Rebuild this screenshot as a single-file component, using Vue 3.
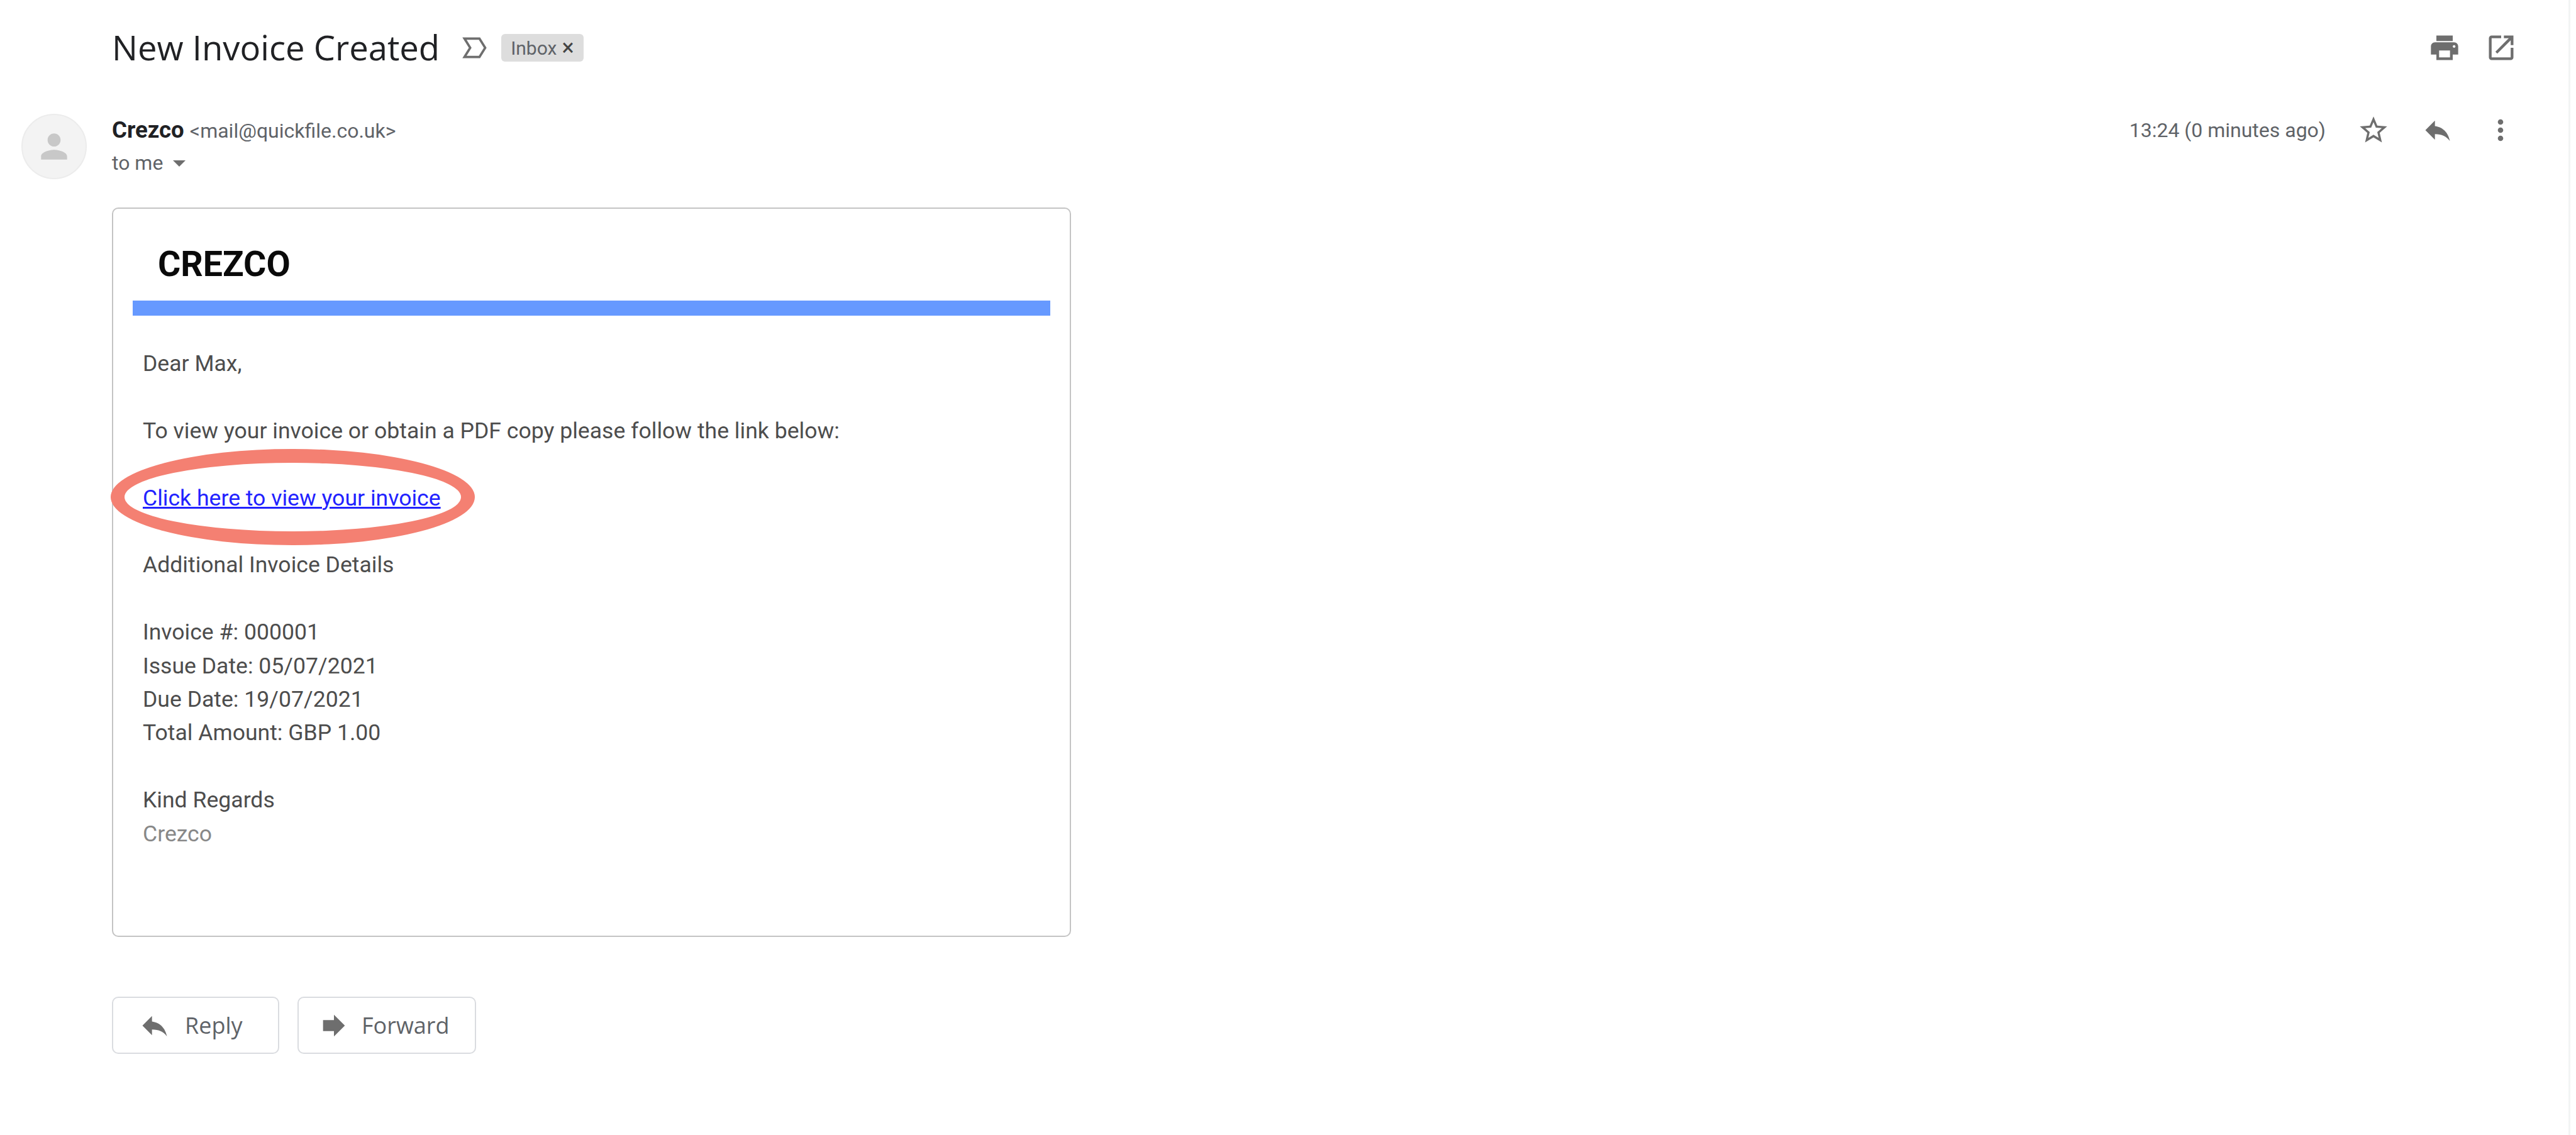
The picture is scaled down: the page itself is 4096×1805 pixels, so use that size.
<script setup>
const bodyLines = ['Invoice #: 000001', 'Issue Date: 05/07/2021', 'Due Date: 19/07/2021', 'Total Amount: GBP 1.00']
</script>

<template>
  <div class="page">
    <header class="subject">
      <h1 class="title">New Invoice Created</h1>
      <svg class="marker" viewBox="0 0 24 24"><path d="M3 4h13l5 8-5 8H3l5-8z" fill="none" stroke="#6e6e6e" stroke-width="2"/></svg>
      <span class="chip">Inbox <span class="chip-x">×</span></span>
      <div class="top-actions">
        <svg class="icon" viewBox="0 0 24 24"><path d="M19 8H5c-1.66 0-3 1.34-3 3v6h4v4h12v-4h4v-6c0-1.66-1.34-3-3-3zm-3 11H8v-5h8v5zm3-7c-.55 0-1-.45-1-1s.45-1 1-1 1 .45 1 1-.45 1-1 1zm-1-9H6v4h12V3z"/></svg>
        <svg class="icon" viewBox="0 0 24 24"><path d="M19 19H5V5h7V3H5c-1.11 0-2 .9-2 2v14c0 1.1.89 2 2 2h14c1.1 0 2-.9 2-2v-7h-2v7zM14 3v2h3.59l-9.83 9.83 1.41 1.41L19 6.41V10h2V3h-7z"/></svg>
      </div>
    </header>

    <section class="message">
      <div class="avatar">
        <svg viewBox="0 0 24 24"><path d="M12 12c2.21 0 4-1.79 4-4s-1.79-4-4-4-4 1.79-4 4 1.79 4 4 4zm0 2c-2.67 0-8 1.34-8 4v2h16v-2c0-2.66-5.33-4-8-4z"/></svg>
      </div>
      <div class="main">
        <div class="meta">
          <div class="sender">
            <div class="from"><b>Crezco</b> <span class="addr">&lt;mail@quickfile.co.uk&gt;</span></div>
            <div class="to">to me <i class="caret"></i></div>
          </div>
          <div class="meta-right">
            <span class="time">13:24 (0 minutes ago)</span>
            <svg class="icon star" viewBox="0 0 24 24"><path d="M22 9.24l-7.19-.62L12 2 9.19 8.63 2 9.24l5.46 4.73L5.82 21 12 17.27 18.18 21l-1.63-7.03L22 9.24zM12 15.4l-3.76 2.27 1-4.28-3.32-2.88 4.38-.38L12 6.1l1.71 4.04 4.38.38-3.32 2.88 1 4.28L12 15.4z"/></svg>
            <svg class="icon reply" viewBox="0 0 24 24"><path d="M10 9V5l-7 7 7 7v-4.1c5 0 8.5 1.6 11 5.1-1-5-4-10-11-11z"/></svg>
            <svg class="icon dots" viewBox="0 0 24 24"><path d="M12 8c1.1 0 2-.9 2-2s-.9-2-2-2-2 .9-2 2 .9 2 2 2zm0 2c-1.1 0-2 .9-2 2s.9 2 2 2 2-.9 2-2-.9-2-2-2zm0 6c-1.1 0-2 .9-2 2s.9 2 2 2 2-.9 2-2-.9-2-2-2z"/></svg>
          </div>
        </div>

        <article class="card">
          <div class="brand">CREZCO</div>
          <div class="bar"></div>
          <div class="body">
            <p>Dear Max,</p>
            <p>To view your invoice or obtain a PDF copy please follow the link below:</p>
            <p><span class="link-wrap"><a class="link">Click here to view your invoice</a><span class="ring"></span></span></p>
            <p>Additional Invoice Details</p>
            <p><span v-for="line in bodyLines" :key="line" class="line">{{ line }}</span></p>
            <p><span class="line">Kind Regards</span><span class="line sig">Crezco</span></p>
          </div>
        </article>

        <div class="buttons">
          <button class="btn reply-btn">
            <svg viewBox="0 0 24 24"><path d="M10 9V5l-7 7 7 7v-4.1c5 0 8.5 1.6 11 5.1-1-5-4-10-11-11z"/></svg>
            Reply
          </button>
          <button class="btn forward-btn">
            <svg viewBox="0 0 24 24"><path d="M12 8V4l8 8-8 8v-4H4V8z"/></svg>
            Forward
          </button>
        </div>
      </div>
    </section>
  </div>
</template>

<style>
html, body { margin: 0; background: #fff; }
</style>

<style scoped>
.page { position: relative; width: 4096px; height: 1805px; box-sizing: border-box; overflow: hidden; font-family: Roboto, "Liberation Sans", sans-serif; background: #fff; }
.page::after { content: ""; position: absolute; top: 0; bottom: 0; right: 9px; width: 3px; background: #f2f4f4; }
.subject { display: flex; align-items: center; height: 44px; margin: 54px 0 0 178px; padding-right: 93px; }
.title { margin: -3px 0 0; font: 400 54.4px/44px "Open Sans", Roboto, sans-serif; color: #202124; white-space: nowrap; }
.marker { width: 44px; height: 44px; margin-left: 34px; }
.chip { margin-left: 20px; height: 44px; padding: 0 15px; box-sizing: border-box; display: flex; align-items: center; gap: 8px; background: #dddddd; border-radius: 6px; font-size: 30px; color: #5f6368; }
.chip-x { font-size: 36px; line-height: 30px; color: #444; }
.top-actions { margin-left: auto; display: flex; gap: 38px; align-items: center; }
.icon { width: 52px; height: 52px; fill: #6e6e6e; flex: none; }

.message { display: flex; margin-top: 81px; }
.avatar { width: 104px; height: 104px; margin: 2px 0 0 34px; border-radius: 50%; background: #f3f3f3; border: 2px solid #ececec; box-sizing: border-box; display: flex; align-items: center; justify-content: center; }
.avatar svg { width: 62px; height: 62px; fill: #c8c8c8; }
.main { flex: 1; margin-left: 40px; min-width: 0; }
.meta { display: flex; justify-content: space-between; padding-right: 94px; }
.from { font-size: 36.6px; line-height: 55px; color: #202124; }
.from b { font-weight: 700; }
.addr { font-size: 32px; color: #5f6368; }
.to { font-size: 32px; line-height: 47px; color: #5f6368; display: flex; align-items: center; gap: 16px; }
.caret { width: 0; height: 0; border-left: 10px solid transparent; border-right: 10px solid transparent; border-top: 10px solid #6e6e6e; }
.meta-right { display: flex; align-items: center; height: 55px; gap: 0; }
.time { font-size: 32px; color: #5f6368; margin-right: 50px; }
.star { margin-right: 50px; }
.reply { margin-right: 48px; }

.card { width: 1525px; height: 1160px; box-sizing: border-box; margin-top: 47px; border: 2px solid #c4c4c4; border-radius: 10px; padding: 0 31px; }
.brand { font-size: 55.5px; font-weight: 700; color: #0a0a0a; line-height: 60px; padding: 59px 0 0 40px; }
.bar { height: 24px; background: #6699ff; margin-top: 27px; }
.body { padding-left: 16px; margin-top: 50px; font-size: 35.6px; line-height: 53.4px; color: #4d4d4d; }
.body p { margin: 0 0 53.4px; }
.line { display: block; }
.sig { color: #888; }
.link-wrap { position: relative; display: inline-block; }
.link { color: #2222ff; text-decoration: underline; }
.ring { position: absolute; left: -51px; right: -54px; top: -52px; bottom: -48px; border: 22px solid #f48072; border-radius: 50%; }

.buttons { display: flex; gap: 29px; margin-top: 95px; }
.btn { height: 91px; box-sizing: border-box; display: flex; align-items: center; background: #fff; border: 2px solid #dadce0; border-radius: 10px; font: 500 36px "Open Sans", Roboto, sans-serif; color: #5f6368; padding: 0; }
.btn svg { width: 52px; height: 52px; fill: #6e6e6e; margin: 0 22px 0 40px; }
.reply-btn { width: 266px; }
.forward-btn { width: 284px; }
.forward-btn svg { margin: 0 18px 0 30px; }
</style>
